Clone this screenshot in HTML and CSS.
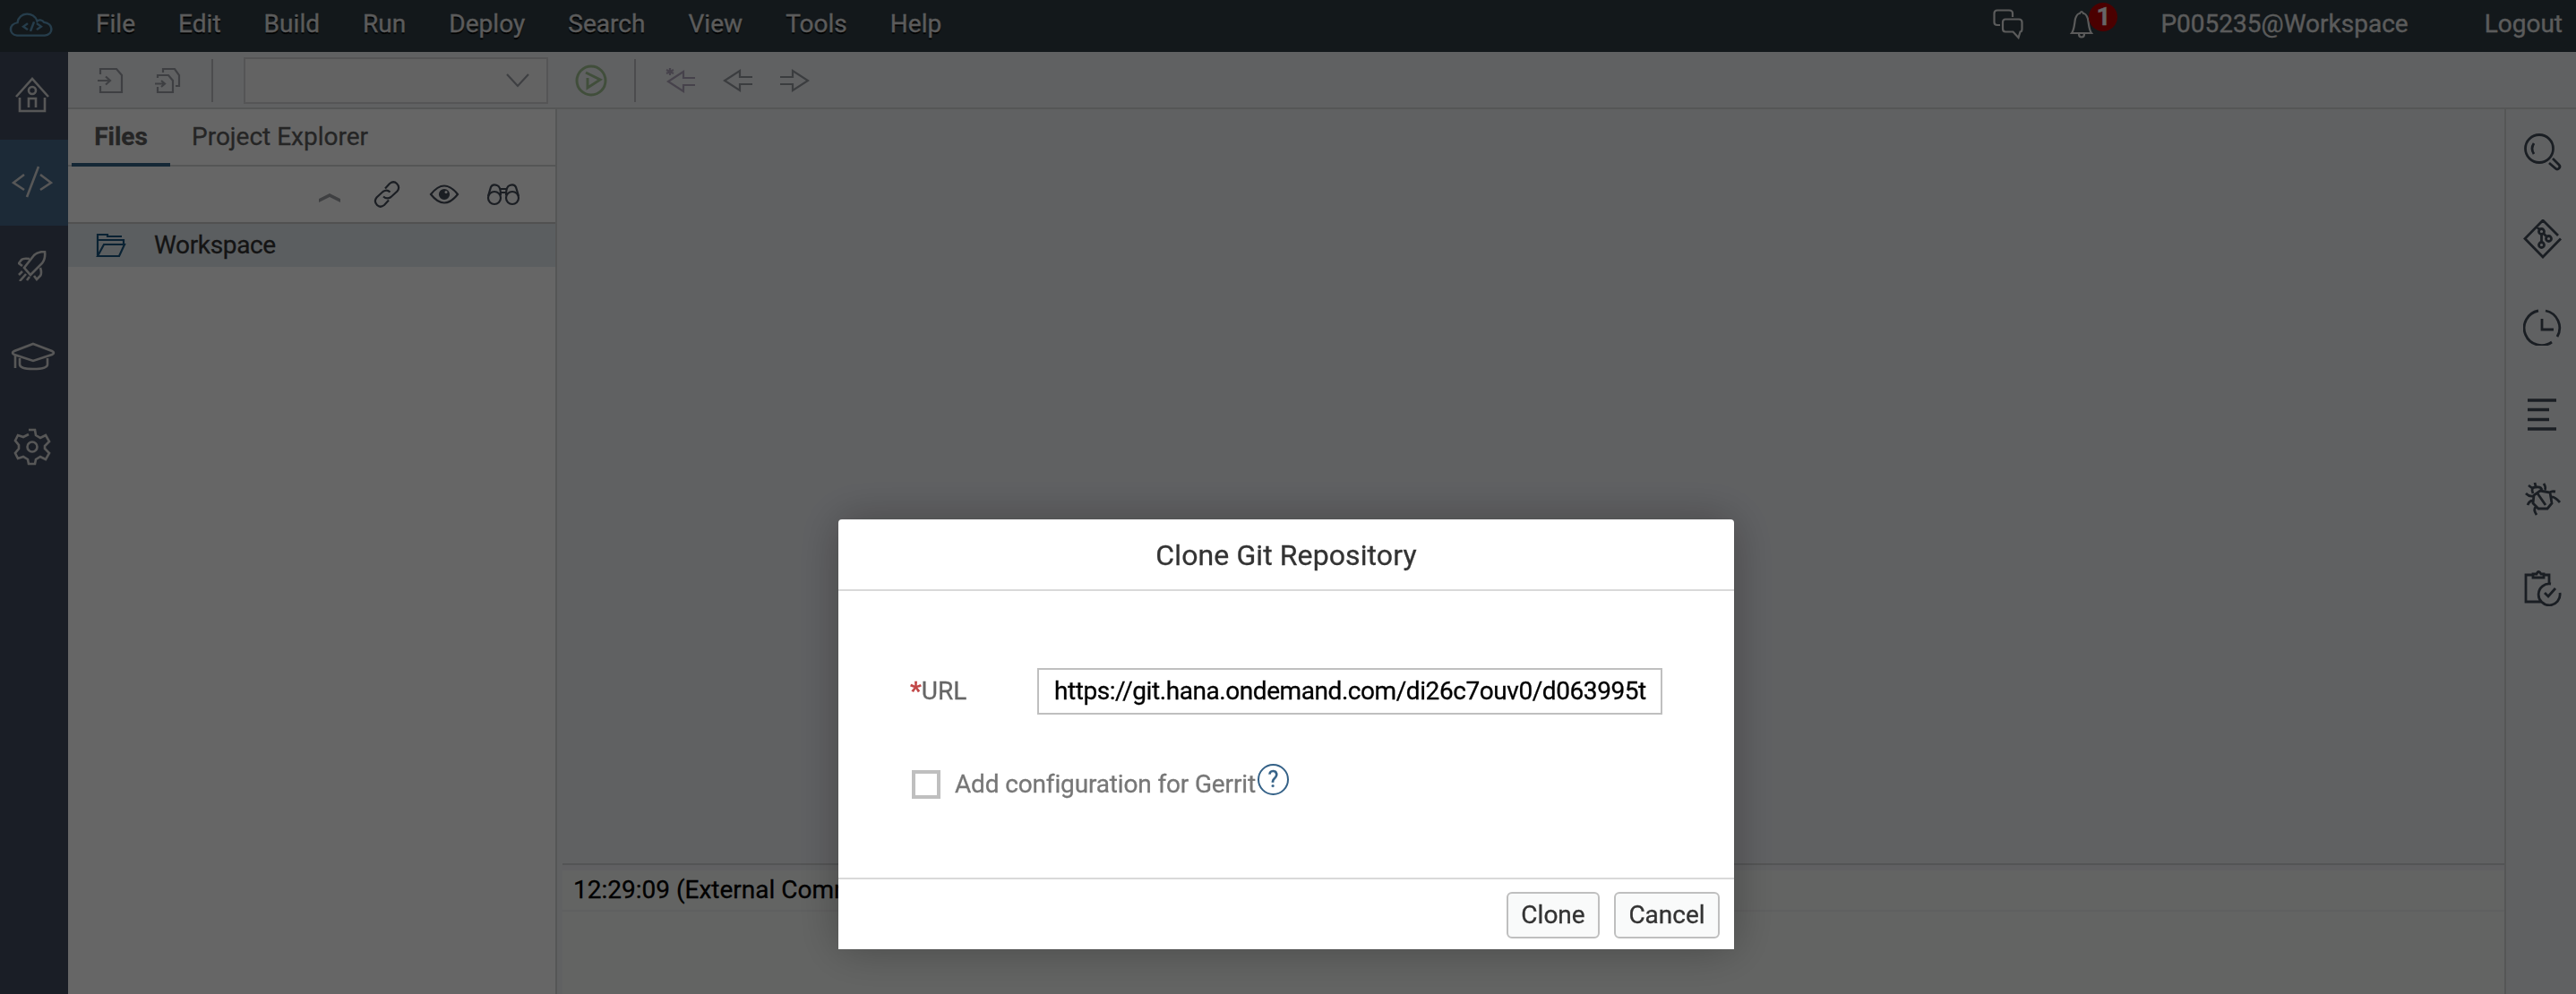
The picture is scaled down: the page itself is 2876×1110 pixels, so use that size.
FILE: index.html
```html
<!DOCTYPE html>
<html lang="en">
<head>
<meta charset="utf-8">
<title>Clone Git Repository</title>
<link rel="stylesheet" href="styles.css">
</head>
<body>
<div class="app">
  <header class="shell">
    <svg class="logo" width="50" height="28" viewBox="0 0 50 32" preserveAspectRatio="none"><path d="M11 30.500H40C50 29 50 15 39 13.500C37 10 33 10 31.500 12C28 -.500 11 0 9.500 14C-.500 16-.500 29 9 30.500Z"/><path d="M21 15l-5 4 5 4M31 15l5 4-5 4M28 13l-4 12"/></svg>
    <nav class="menu">
      <a>File</a><a>Edit</a><a>Build</a><a>Run</a><a>Deploy</a><a>Search</a><a>View</a><a>Tools</a><a>Help</a>
    </nav>
    <div class="shell-right">
      <svg class="chat" width="34" height="34" viewBox="0 0 34 34"><path d="M8 18H5Q1.500 18 1.500 15V5Q1.500 1.500 5 1.500H18Q22 1.500 22 5V9"/><path d="M14 11.500H29Q32.500 11.500 32.500 15V22Q32.500 25.500 30.500 25.500L28.500 32L22.500 25.500H14Q11 25.500 11 22V15Q11 11.500 14 11.500Z"/></svg>
      <span class="alerts">
        <svg width="27" height="32" viewBox="0 0 27 32"><path d="M2 26C5 22 5 15 6 10Q8 4 11 4Q13 0 15 4Q18 4 20 10C21 15 21 22 24 26ZM10 27Q10 30.500 13 30.500Q16 30.500 16 27"/></svg>
        <span class="badge">1</span>
      </span>
      <span class="user">P005235@Workspace</span>
      <span class="logout">Logout</span>
    </div>
  </header>
  <div class="body">
    <aside class="side">
      <div class="side-item home"><svg width="40" height="40" viewBox="0 0 40 40"><path d="M2 22L20 2L38 22M6 23V38H34V23M16 34V24H24V34"/><circle cx="20" cy="15" r="4"/></svg></div>
      <div class="side-item active"><svg width="46" height="36" viewBox="0 0 46 36"><path d="M14 10L2 19L14 27M32 10L44 19L32 27M30 1L17 35"/></svg></div>
      <div class="side-item rocket"><svg width="32" height="34" viewBox="0 0 32 34"><path d="M30 1Q22 1 18 5L7 19L14 27L27 14Q31 9 30 1ZM13 9Q6 8 4 10L1 14L5 17M25 19Q27 25 25 28L21 32L18 28M5 23L1 27M9 26L2 34M13 29L10 33"/></svg></div>
      <div class="side-item cap"><svg width="50" height="32" viewBox="0 0 50 32"><path d="M25 2L46 10Q50 12 46 14L25 21L4 14Q0 12 4 10ZM5 15V29M10 18V25Q10 30 25 30Q41 30 41 25V18"/></svg></div>
      <div class="side-item gear"><svg width="42" height="42" viewBox="0 0 42 42"><path d="M17 2H24L25 8L30 11L36 8L40 15L35 20V23L40 28L36 35L30 32L25 35L24 40H17L16 35L11 32L5 34L2 28L6 23V19L2 14L5 8L11 10L17 7"/><circle cx="21" cy="21" r="5.500"/></svg></div>
    </aside>
    <div class="work">
      <div class="toolbar">
        <svg class="t-import" width="30" height="30" viewBox="0 0 30 30"><path d="M4 8V2H22L28 9V28H4V21M1 15H14M10 10.500L15 15L10 19.500"/></svg>
        <svg class="t-importall" width="30" height="30" viewBox="0 0 30 30"><path d="M4 12V9H16L21 15V28H4V22M1 18.500H11M8 15L12 18.500L8 22M10 6V2H23L28 9V21H24"/></svg>
        <i class="divider"></i>
        <div class="select"><svg width="26" height="16" viewBox="0 0 26 16"><path d="M1 1L13 14L25 1"/></svg></div>
        <svg class="t-run" width="36" height="36" viewBox="0 0 36 36"><circle cx="18" cy="18" r="16"/><path d="M12 9L28 17L14 26V15"/></svg>
        <i class="divider second"></i>
        <svg class="t-last" width="36" height="30" viewBox="0 0 36 30"><path d="M34 12H21V5L4 16L21 27V20H34M6 1V9M2 3L10 7M10 3L2 7"/></svg>
        <svg class="t-back" width="34" height="28" viewBox="0 0 34 28"><path d="M33 10H19V3L2 14L19 25V18H33"/></svg>
        <svg class="t-fwd" width="34" height="28" viewBox="0 0 34 28"><path d="M1 10H15V3L32 14L15 25V18H1"/></svg>
      </div>
      <div class="main">
        <section class="files">
          <div class="tabs"><span class="tab current">Files</span><span class="tab explorer">Project Explorer</span></div>
          <div class="tools">
            <svg class="p-up" width="26" height="14" viewBox="0 0 26 14"><path d="M1 8L13 2L25 8V12L13 6L1 12Z"/></svg>
            <svg class="p-link" width="30" height="30" viewBox="0 0 30 30"><path d="M13 8.500L18 3Q22.500-.500 26 3Q30 7 26.500 11.500L19.500 18Q15 21 11 17.500M17 21.500L12 27Q7.500 30.500 4 27Q0 23 3.500 18.500L10.500 12Q15 9 18.500 12.500"/></svg>
            <svg class="p-eye" width="34" height="24" viewBox="0 0 34 24"><path d="M2 12Q17-7 32 12Q17 31 2 12Z"/><circle class="solid" cx="17" cy="12" r="5"/><circle class="glint" cx="19" cy="9.500" r="1.500"/></svg>
            <svg class="p-bino" width="38" height="26" viewBox="0 0 38 26"><circle cx="9" cy="17" r="7"/><circle cx="29" cy="17" r="7"/><path d="M2 15L5 5Q7 1 12 3Q16 4 16 14M36 15L33 5Q31 1 26 3Q22 4 22 14M15 7H23M16 11H22"/></svg>
          </div>
          <div class="row"><svg width="34" height="28" viewBox="0 0 34 28"><path d="M2 26V2H13V4H29M2 8H31V12M2 26L9 13H32L26 26Z"/></svg><span>Workspace</span></div>
        </section>
        <section class="editor">
          <div class="console"><div class="log"><span>12:29:09 (External Command)</span></div></div>
        </section>
        <aside class="rail">
          <svg width="44" height="44" viewBox="0 0 44 44"><circle cx="18" cy="18" r="15.500"/><path d="M12 12Q8 18 12 24M29 34L36 40Q38 42 40 40Q42 38 40 36L33 29"/></svg>
          <svg width="44" height="44" viewBox="0 0 44 44"><path d="M39 18L22 1L2 21.500L22 42L42 21.500M15 8L18.500 11.500M20.500 17V25.500M22.500 15.500L26.500 19.500"/><circle cx="20.500" cy="13.500" r="3"/><circle cx="20.500" cy="28.500" r="3"/><circle cx="28.500" cy="21.500" r="3"/></svg>
          <svg width="44" height="44" viewBox="0 0 44 44"><path d="M17 5A19.500 19.500 0 1 0 32 40M25 5A19.500 19.500 0 0 1 38 34M21 14V26H34"/></svg>
          <svg class="thick" width="44" height="44" viewBox="0 0 44 44"><path d="M5 8H37M5 18.500H29M5 29.500H29M5 40H37"/></svg>
          <svg width="44" height="44" viewBox="0 0 44 44"><path d="M19 12L30 14L32 26L27 32H17L11 26L12 17ZM11 15Q8 8 14 8Q20 7 21 11M16 15L25 28M14 7L13 3M10 9L6 6M24 11Q26 9 23 4M30 15Q30 12 36 13M31 19Q35 18 41 25M11 18Q7 19 3 15M11 23Q7 23 5 28M14 30Q11 33 15 39"/></svg>
          <svg width="44" height="44" viewBox="0 0 44 44"><path d="M10 9H3V39H20M24 9H29V20M11 12V8H15Q17 3 20 8H23V12ZM41 29A12 12 0 1 1 31 19M24 29L28 33L36 24"/></svg>
        </aside>
      </div>
    </div>
  </div>
</div>
<div class="overlay">
  <div class="dialog">
    <h1>Clone Git Repository</h1>
    <div class="form">
      <div class="field"><label><b>*</b>URL</label><div class="input"><span>https://git.hana.ondemand.com/di26c7ouv0/d063995t</span></div></div>
      <div class="check"><i class="box"></i><span class="check-label">Add configuration for Gerrit</span><span class="help">?</span></div>
    </div>
    <footer><button class="clone">Clone</button><button class="cancel">Cancel</button></footer>
  </div>
</div>
</body>
</html>
```
FILE: styles.css
```css
* { box-sizing: border-box; }
body { margin: 0; font: 28px/32px Roboto, "Liberation Sans", sans-serif; -webkit-text-stroke: .3px; overflow: hidden; }
svg { display: block; flex: none; fill: none; stroke: currentColor; stroke-width: 2.2; }
.app { display: flex; flex-direction: column; width: 2876px; height: 1110px; }
.shell { display: flex; height: 58px; padding: 0 15px 5px 10px; align-items: center; background: #303e45; color: #e3e3e3; }
.logo { color: #5f99bd; stroke-width: 2.5; }
.menu { display: flex; gap: 48px; margin-left: 47px; text-shadow: 0 2px 1px #000; letter-spacing: .03px; }
.shell-right { display: flex; align-items: center; margin-left: auto; }
.alerts { position: relative; margin-left: 52px; margin-right: 74px; }
.badge { position: absolute; left: 21px; top: -8px; width: 32px; height: 32px; border-radius: 50%; background: #bb0000; color: #fff; font-weight: 700; text-align: center; line-height: 31px; }
.logout { margin-left: 85px; }
.body { display: flex; flex: 1; min-height: 0; }
.side { width: 76px; background: #434d5f; color: #d9d9d9; }
.side svg { stroke-width: 2.6; }
.side-item { display: flex; align-items: center; justify-content: center; height: 96px; padding: 0 4px 3px 0; }
.home { height: 98px; }
.active { background: #46698a; }
.rocket { height: 92px; }
.cap { height: 110px; padding-right: 2px; }
.gear { height: 92px; }
.work { flex: 1; display: flex; flex-direction: column; min-width: 0; }
.toolbar { height: 64px; border-bottom: 2px solid #d5d6d8; background: #f0f2f5; display: flex; align-items: center; padding: 2px 0 0 32px; color: #9b9fa6; }
.t-importall { margin-left: 34px; }
.divider { width: 2px; height: 48px; background: #bdbfc3; margin-left: 34px; }
.select { width: 340px; height: 52px; margin-left: 34px; border: 2px solid #d4d5d7; background: #f7f7f7; display: flex; justify-content: flex-end; align-items: center; padding-right: 19px; }
.t-run { margin-left: 30px; color: #a2c495; stroke-width: 3; }
.second { margin-left: 30px; }
.t-last { margin-left: 32px; color: #b0a6bb; }
.t-back { margin-left: 29px; color: #94989f; }
.t-fwd { margin-left: 29px; color: #94989f; }
.main { flex: 1; display: flex; min-height: 0; }
.files { width: 546px; border-right: 2px solid #d5d6d8; background: #fff; }
.tabs { display: flex; height: 64px; border-bottom: 2px solid #d5d6d8; padding-left: 4px; color: #5c5c5c; line-height: 61px; }
.current { width: 110px; height: 64px; text-align: center; font-weight: 700; border-bottom: 4px solid #346187; }
.explorer { margin-left: 24px; }
.tools { display: flex; align-items: center; height: 64px; border-bottom: 2px solid #cbcbcb; padding-left: 279px; color: #444c59; }
.p-up { fill: #9ea1a5; stroke: none; margin-top: 8px; }
.p-link { margin-left: 36px; }
.p-eye { margin-left: 32px; }
.p-bino { margin-left: 30px; }
.solid { fill: currentColor; }
.glint { fill: #fff; stroke: none; }
.row { display: flex; align-items: center; height: 48px; padding-left: 31px; background: #e4ebf0; }
.row svg { color: #19557f; }
.row span { margin-left: 31px; color: #333; letter-spacing: -.35px; }
.editor { flex: 1; display: flex; align-items: flex-end; padding-left: 6px; background: #f0f2f6; }
.console { flex: 1; height: 146px; border-top: 2px solid #d0d2d4; background: #f7f9f7; box-shadow: inset 0 6px #f0f1f4; padding-top: 6px; }
.log { height: 46px; border-bottom: 2px solid #eeefef; padding: 6px 0 0 12px; color: #000; }
.rail { width: 80px; border-left: 2px solid #d5d6d8; background: #f0f2f6; color: #434d59; padding: 26px 0 0 19px; display: flex; flex-direction: column; gap: 53px; }
.rail svg { stroke-width: 2.8; }
.rail .thick { stroke-width: 3.4; }
.overlay { position: fixed; inset: 0; background: rgba(0,0,0,.6); padding: 580px 0 0 936px; }
.dialog { width: 1000px; height: 480px; display: flex; flex-direction: column; border-radius: 4px 4px 0 0; background: #fff; color: #333; box-shadow: 0 0 50px rgba(0,0,0,.28); }
h1 { margin: 0; height: 80px; border-bottom: 2px solid #d9d9d9; font-size: 32px; font-weight: 400; line-height: 81px; text-align: center; letter-spacing: .1px; }
.form { flex: 1; padding: 86px 80px 0; }
.field { display: flex; height: 52px; align-items: center; justify-content: space-between; color: #666; }
.field b { color: #c14646; font-weight: 700; }
.input { width: 698px; height: 52px; border: 2px solid #bfbfbf; padding-left: 17px; line-height: 48px; color: #000; white-space: nowrap; letter-spacing: -.43px; }
.check { display: flex; align-items: center; height: 36px; margin-top: 60px; margin-left: 2px; color: #777; }
.box { width: 32px; height: 32px; border: 4px solid #bfbfbf; }
.check-label { margin-left: 16px; letter-spacing: -.15px; }
.help { width: 35px; height: 35px; margin: -12px 0 0 2px; border: 2.500px solid #346187; border-radius: 50%; color: #346187; font-size: 25px; line-height: 31px; text-align: center; }
footer { height: 80px; border-top: 2px solid #d9d9d9; display: flex; justify-content: flex-end; gap: 16px; padding: 14px 16px 0; }
button { height: 52px; padding: 0; border: 2px solid #bfbfbf; border-radius: 6px; background: #f9fafa; font: inherit; color: #333; }
.clone { width: 104px; }
.cancel { width: 118px; }
```
